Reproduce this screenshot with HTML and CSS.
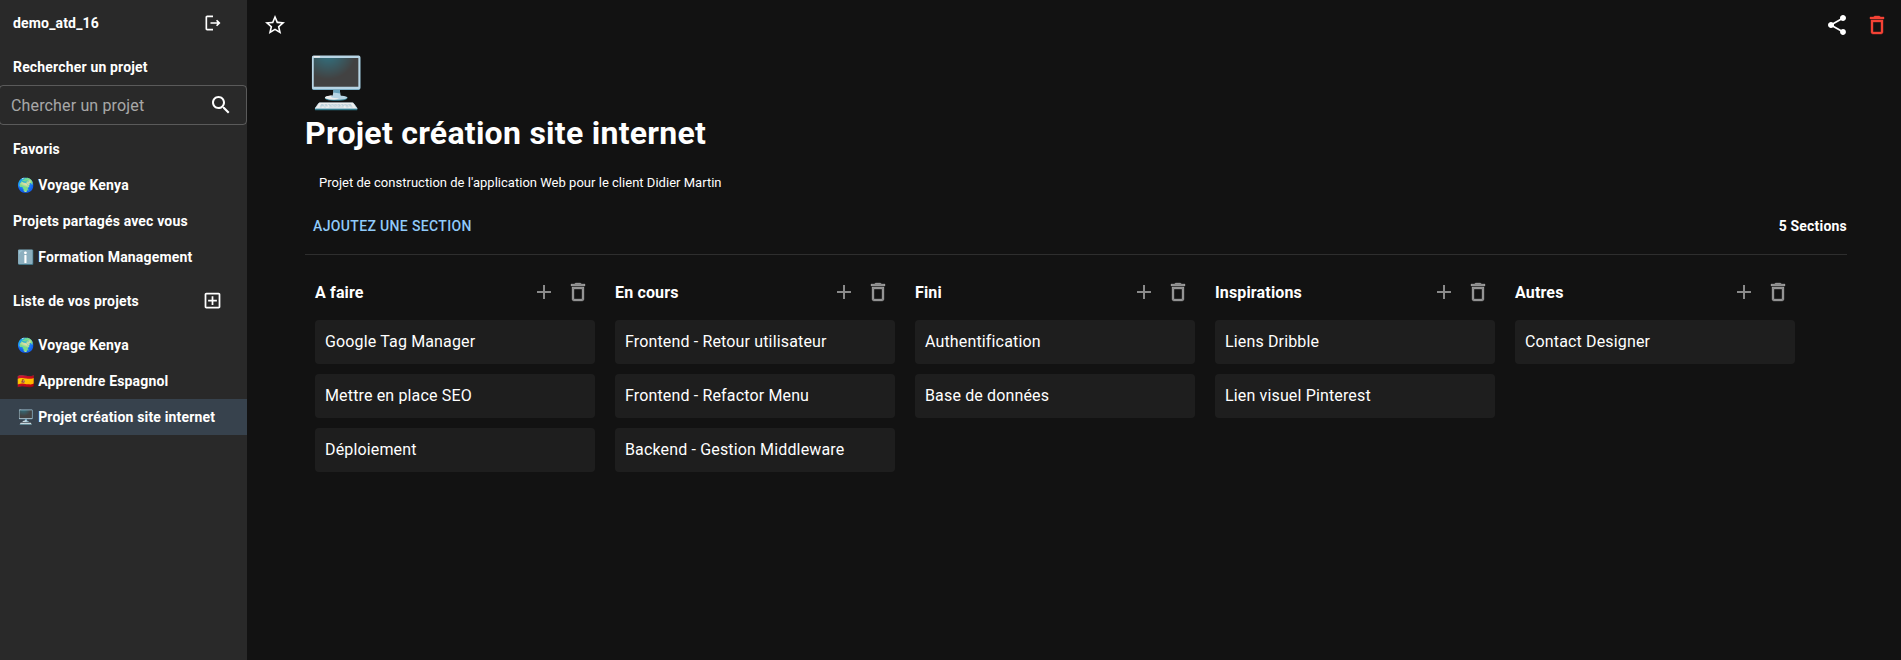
FILE: index.html
```html
<!DOCTYPE html>
<html lang="fr">
<head>
<meta charset="UTF-8">
<title>Projet création site internet</title>
<link rel="stylesheet" href="styles.css">
</head>
<body>
<svg class="sprites" width="0" height="0">
    <symbol id="i-star" viewBox="0 0 24 24"><path d="M22 9.24l-7.19-.62L12 2 9.19 8.63 2 9.24l5.46 4.73L5.82 21 12 17.27 18.18 21l-1.63-7.03L22 9.24zM12 15.4l-3.76 2.27 1-4.28-3.32-2.88 4.38-.38L12 6.1l1.71 4.04 4.38.38-3.32 2.88 1 4.28L12 15.4z"/></symbol>
    <symbol id="i-share" viewBox="0 0 24 24"><path d="M18 16.08c-.76 0-1.44.3-1.96.77L8.91 12.7c.05-.23.09-.46.09-.7s-.04-.47-.09-.7l7.05-4.11c.54.5 1.25.81 2.04.81 1.66 0 3-1.34 3-3s-1.34-3-3-3-3 1.34-3 3c0 .24.04.47.09.7L8.04 9.81C7.5 9.31 6.79 9 6 9c-1.66 0-3 1.34-3 3s1.34 3 3 3c.79 0 1.5-.31 2.04-.81l7.12 4.16c-.05.21-.08.43-.08.65 0 1.61 1.31 2.92 2.92 2.92 1.61 0 2.92-1.31 2.92-2.92s-1.31-2.92-2.92-2.92z"/></symbol>
    <symbol id="i-trash" viewBox="0 0 24 24"><path d="M6 19c0 1.1.9 2 2 2h8c1.1 0 2-.9 2-2V7H6v12zM8 9h8v10H8V9zm7.5-5-1-1h-5l-1 1H5v2h14V4h-3.5z"/></symbol>
    <symbol id="i-search" viewBox="0 0 24 24"><path d="M15.5 14h-.79l-.28-.27C15.41 12.59 16 11.11 16 9.5 16 5.91 13.09 3 9.5 3S3 5.91 3 9.5 5.91 16 9.5 16c1.61 0 3.09-.59 4.23-1.57l.27.28v.79l5 4.99L20.49 19l-4.99-5zm-6 0C7.01 14 5 11.99 5 9.5S7.01 5 9.5 5 14 7.01 14 9.5 11.99 14 9.5 14z"/></symbol>
    <symbol id="i-logout" viewBox="0 0 24 24"><path d="M17 8l-1.41 1.41L17.17 11H9v2h8.17l-1.58 1.58L17 16l4-4-4-4zM5 5h7V3H5c-1.1 0-2 .9-2 2v14c0 1.1.9 2 2 2h7v-2H5V5z"/></symbol>
    <symbol id="i-addbox" viewBox="0 0 24 24"><path d="M19 3H5c-1.11 0-2 .9-2 2v14c0 1.1.89 2 2 2h14c1.1 0 2-.9 2-2V5c0-1.1-.9-2-2-2zm0 16H5V5h14v14zm-8-2h2v-4h4v-2h-4V7h-2v4H7v2h4z"/></symbol>
    <symbol id="i-add" viewBox="0 0 24 24"><path d="M19 13h-6v6h-2v-6H5v-2h6V5h2v6h6v2z"/></symbol>
</svg>

<div class="app">
    <aside class="sidebar">
        <div class="side-head user-row">
            <span>demo_atd_16</span>
            <svg class="icon icon-20"><use href="#i-logout"/></svg>
        </div>
        <div class="side-head search-title">Rechercher un projet</div>
        <div class="search-box">
            <span>Chercher un projet</span>
            <svg class="icon"><use href="#i-search"/></svg>
        </div>
        <div class="side-head fav-title">Favoris</div>
        <div class="project">🌍 <span>Voyage Kenya</span></div>
        <div class="side-head shared-title">Projets partagés avec vous</div>
        <div class="project">ℹ️ <span>Formation Management</span></div>
        <div class="side-head list-title">
            <span>Liste de vos projets</span>
            <svg class="icon icon-21"><use href="#i-addbox"/></svg>
        </div>
        <div class="project">🌍 <span>Voyage Kenya</span></div>
        <div class="project">🇪🇸 <span>Apprendre Espagnol</span></div>
        <div class="project active">🖥️ <span>Projet création site internet</span></div>
    </aside>

    <main class="main">
        <div class="topbar">
            <svg class="icon"><use href="#i-star"/></svg>
            <div class="topbar-right">
                <svg class="icon"><use href="#i-share"/></svg>
                <svg class="icon trash red"><use href="#i-trash"/></svg>
            </div>
        </div>
        <div class="content">
            <div class="big-emoji">🖥️</div>
            <h1>Projet création site internet</h1>
            <p class="desc">Projet de construction de l'application Web pour le client Didier Martin</p>
            <div class="section-bar">
                <span class="add-section">AJOUTEZ UNE SECTION</span>
                <span class="count">5 Sections</span>
            </div>
            <hr class="divider">
            <div class="board">
                <section class="col">
                    <div class="col-head"><h3>A faire</h3><svg class="icon gray"><use href="#i-add"/></svg><svg class="icon trash gray"><use href="#i-trash"/></svg></div>
                    <div class="card">Google Tag Manager</div>
                    <div class="card">Mettre en place SEO</div>
                    <div class="card">Déploiement</div>
                </section>
                <section class="col">
                    <div class="col-head"><h3>En cours</h3><svg class="icon gray"><use href="#i-add"/></svg><svg class="icon trash gray"><use href="#i-trash"/></svg></div>
                    <div class="card">Frontend - Retour utilisateur</div>
                    <div class="card">Frontend - Refactor Menu</div>
                    <div class="card">Backend - Gestion Middleware</div>
                </section>
                <section class="col">
                    <div class="col-head"><h3>Fini</h3><svg class="icon gray"><use href="#i-add"/></svg><svg class="icon trash gray"><use href="#i-trash"/></svg></div>
                    <div class="card">Authentification</div>
                    <div class="card">Base de données</div>
                </section>
                <section class="col">
                    <div class="col-head"><h3>Inspirations</h3><svg class="icon gray"><use href="#i-add"/></svg><svg class="icon trash gray"><use href="#i-trash"/></svg></div>
                    <div class="card">Liens Dribble</div>
                    <div class="card">Lien visuel Pinterest</div>
                </section>
                <section class="col">
                    <div class="col-head"><h3>Autres</h3><svg class="icon gray"><use href="#i-add"/></svg><svg class="icon trash gray"><use href="#i-trash"/></svg></div>
                    <div class="card">Contact Designer</div>
                </section>
            </div>
        </div>
    </main>
</div>
</body>
</html>
```

FILE: styles.css
```css
* {
    box-sizing: border-box;
}

body {
    margin: 0;
    background: #121212;
    color: #fff;
    font-family: Roboto, sans-serif;
    overflow: hidden;
}

.sprites {
    display: block;
    height: 0;
}

.app {
    display: flex;
    height: 660px;
}

.icon {
    width: 24px;
    height: 24px;
    fill: currentColor;
    flex: none;
}

.icon-20 {
    width: 20px;
    height: 20px;
}

.icon-21 {
    width: 21px;
    height: 21px;
}

.trash {
    stroke: currentColor;
    stroke-width: 0.4;
}

.red {
    color: #f44336;
}

.gray {
    color: rgba(255, 255, 255, 0.5);
}

/* sidebar */
.sidebar {
    width: 247px;
    flex: none;
    background: #292929;
}

.side-head {
    display: flex;
    align-items: center;
    justify-content: space-between;
    padding: 0 24px 0 13px;
    font-size: 14px;
    font-weight: 700;
    line-height: 20px;
    letter-spacing: 0.17px;
}

.user-row {
    height: 46px;
}

.search-title {
    margin-top: 11px;
}

.search-box {
    display: flex;
    align-items: center;
    justify-content: space-between;
    height: 40px;
    margin: 8px 0 0 -1px;
    padding: 0 13px 0 11px;
    border: 1px solid rgba(255, 255, 255, 0.23);
    border-radius: 4px;
    color: rgba(255, 255, 255, 0.6);
    font-size: 16px;
    letter-spacing: 0.15px;
}

.search-box .icon {
    color: #fff;
}

.fav-title {
    margin-top: 14px;
}

.project {
    display: flex;
    align-items: center;
    gap: 4px;
    height: 36px;
    padding-left: 17px;
    font-size: 14px;
    font-weight: 700;
    letter-spacing: 0.17px;
}

.fav-title + .project {
    margin-top: 8px;
}

.shared-title {
    margin-top: 8px;
}

.shared-title + .project {
    margin-top: 8px;
}

.list-title {
    margin-top: 15px;
    margin-bottom: 16px;
}

.project.active {
    background: #37424d;
}

/* main */
.main {
    flex: 1;
    min-width: 0;
}

.topbar {
    display: flex;
    align-items: center;
    justify-content: space-between;
    height: 50px;
    padding: 0 12px 0 16px;
}

.topbar-right {
    display: flex;
    gap: 16px;
}

.content {
    padding: 0 54px 0 58px;
}

.big-emoji {
    height: 60px;
    font-size: 50px;
    line-height: 66px;
}

h1 {
    margin: 0;
    font-size: 32px;
    font-weight: 700;
    line-height: 47px;
    letter-spacing: 0.27px;
}

.desc {
    margin: 16px 0 0 14px;
    font-size: 13px;
    line-height: 20px;
    letter-spacing: 0.02px;
}

.section-bar {
    display: flex;
    justify-content: space-between;
    align-items: center;
    height: 24px;
    margin-top: 21px;
    padding-left: 8px;
}

.add-section {
    color: #90caf9;
    font-size: 14px;
    font-weight: 500;
    letter-spacing: 0.35px;
}

.count {
    font-size: 14px;
    font-weight: 700;
    letter-spacing: 0.2px;
}

.divider {
    margin: 16px 0 0;
    border: 0;
    border-top: 1px solid rgba(255, 255, 255, 0.12);
}

.board {
    display: flex;
    gap: 20px;
    padding: 21px 0 0 10px;
}

.col {
    width: 280px;
    flex: none;
}

.col-head {
    display: flex;
    align-items: center;
    gap: 10px;
    height: 32px;
    margin-bottom: 12px;
    padding-right: 5px;
}

.col-head h3 {
    flex: 1;
    margin: 0;
    font-size: 16px;
    font-weight: 700;
    letter-spacing: 0.15px;
}

.card {
    display: flex;
    align-items: center;
    height: 44px;
    margin-bottom: 10px;
    padding: 0 0 2px 10px;
    background: #1e1e1e;
    border-radius: 4px;
    font-size: 16px;
    letter-spacing: 0.15px;
}
```
